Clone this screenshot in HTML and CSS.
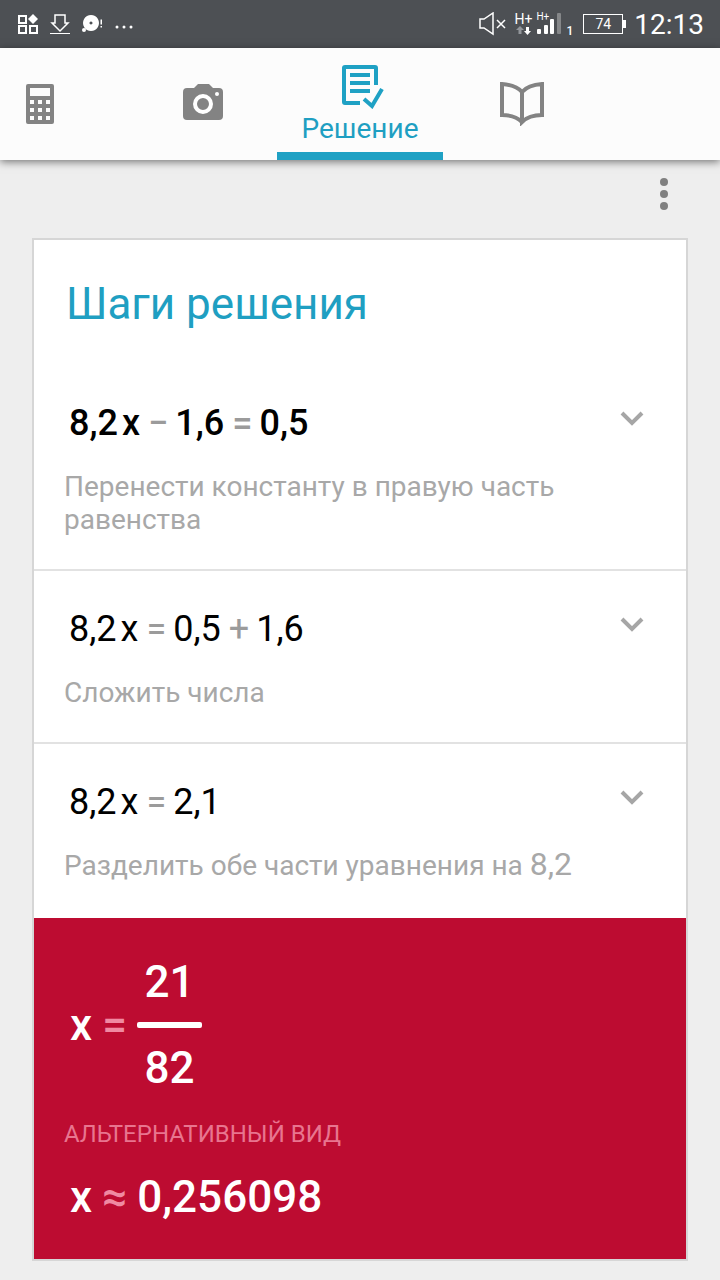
FILE: index.html
```html
<!DOCTYPE html>
<html lang="ru">
<head>
    <meta charset="UTF-8">
    <meta name="viewport" content="width=device-width, initial-scale=1.0">
    <title>Решение</title>
    <link rel="stylesheet" href="styles.css">
</head>
<body>
    <div class="status-bar">
        <div class="status-left">
            <svg width="22" height="22" viewBox="0 0 22 22" fill="none" stroke="#fff" stroke-width="2">
                <path d="M2 3h7v7H2zM2 13h7v7H2zM13 13h7v7h-7z"/>
                <path d="M16 1l5 5-5 5-5-5z" fill="#fff" stroke="none"/>
            </svg>
            <svg width="20" height="22" viewBox="0 0 20 22" fill="none" stroke="#fff">
                <path d="M5 2h10v8h3l-8 8-8-8h3z" stroke-width="1.500"/>
                <path d="M0 20.500h20" stroke-width="1"/>
            </svg>
            <svg width="22" height="22" viewBox="0 0 22 22" fill="#fff">
                <path d="M10 2a8 8 0 1 0 .01 0zM10 8.500a1.500 1.500 0 1 1-.01 0z" fill-rule="evenodd"/>
                <circle cx="3" cy="17" r="2"/>
                <path d="M19.500 6.500h1.500v5h-1.500zM19.500 13h1.500v1.500h-1.500z"/>
            </svg>
            <svg width="20" height="22" viewBox="0 0 20 22" fill="#fff">
                <circle cx="3" cy="14" r="1.500"/><circle cx="10" cy="14" r="1.500"/><circle cx="17" cy="14" r="1.500"/>
            </svg>
        </div>
        <div class="status-right">
            <svg width="28" height="24" viewBox="0 0 28 24" fill="none" stroke="#fff" stroke-width="1.500">
                <path d="M1 7h4l9-6v21l-9-6H1zM18 8l8 8M26 8l-8 8"/>
            </svg>
            <div class="network">
                <span>H+</span>
                <svg width="16" height="10" viewBox="0 0 16 10">
                    <path d="M5 0l4 4H6.500v4h-3V4H1z" fill="#92959a"/>
                    <path d="M11 1h3v4h2l-3.500 4L9 5h2z" fill="#fff"/>
                </svg>
            </div>
            <div class="signal">
                <svg width="26" height="24" viewBox="0 0 26 24" fill="#fff">
                    <rect x="1" y="17" width="4" height="5" rx="1"/>
                    <rect x="8" y="13" width="4" height="9" rx="1"/>
                    <rect x="14" y="7" width="4" height="15" rx="1"/>
                    <rect x="21" y="1" width="4" height="21" rx="1" fill="#858789"/>
                </svg>
                <span class="signal-type">H+</span>
            </div>
            <span class="sim">1</span>
            <div class="battery"><span>74</span></div>
            <span class="clock">12:13</span>
        </div>
    </div>

    <nav class="tabs">
        <button class="tab tab-calculator" aria-label="Калькулятор">
            <svg width="28" height="40" viewBox="0 0 28 40">
                <path fill="#838383" fill-rule="evenodd" d="M2 0h24a2 2 0 0 1 2 2v36a2 2 0 0 1-2 2H2a2 2 0 0 1-2-2V2a2 2 0 0 1 2-2zM4 4v8h20V4zM4 16v4h4v-4zM12 16v4h4v-4zM20 16v4h4v-4zM4 24v4h4v-4zM12 24v4h4v-4zM20 24v4h4v-4zM4 32v4h4v-4zM12 32v4h4v-4zM20 32v4h4v-4z"/>
            </svg>
        </button>
        <button class="tab tab-camera" aria-label="Камера">
            <svg width="40" height="40" viewBox="0 0 40 40">
                <path fill="#838383" d="M4 4h7l4-4h11l4 4h6a4 4 0 0 1 4 4v24a4 4 0 0 1-4 4H4a4 4 0 0 1-4-4V8a4 4 0 0 1 4-4z"/>
                <circle cx="20" cy="20" r="8" fill="none" stroke="#fff" stroke-width="4"/>
                <circle cx="34" cy="10" r="2" fill="#fff"/>
            </svg>
        </button>
        <button class="tab tab-active">
            <svg width="48" height="44" viewBox="-6 0 48 44" fill="none" stroke="#1fa1c4" stroke-width="4">
                <path d="M34 20V3a1 1 0 0 0-1-1H3a1 1 0 0 0-1 1v34a1 1 0 0 0 1 1h15M8 10h20M8 18h20M8 26h20M22 34l8 7 10-17"/>
            </svg>
            Решение
        </button>
        <button class="tab tab-book" aria-label="Справочник">
            <svg width="44" height="44" viewBox="0 0 44 44" fill="none" stroke="#838383" stroke-width="4">
                <path d="M22 40Q15 33 2 33V2Q16 3 22 10Q28 3 42 2V33Q29 33 22 40V10"/>
            </svg>
        </button>
    </nav>

    <div class="toolbar">
        <button class="menu-button" aria-label="Меню">
            <svg width="8" height="32" viewBox="0 0 8 32" fill="#808080">
                <circle cx="4" cy="4" r="4"/><circle cx="4" cy="16" r="4"/><circle cx="4" cy="28" r="4"/>
            </svg>
        </button>
    </div>

    <main class="card">
        <h1>Шаги решения</h1>

        <section class="step">
            <div class="step-head">
                <div class="equation bold">8,2<span class="var">x</span><span class="op">−</span>1,6<span class="op">=</span>0,5</div>
                <button class="expand" aria-label="Развернуть">
                    <svg width="24" height="16" viewBox="0 0 24 16" fill="none" stroke="#a6a6a6" stroke-width="4"><path d="M2 2l10 10L22 2"/></svg>
                </button>
            </div>
            <p>Перенести константу в правую часть равенства</p>
        </section>

        <section class="step">
            <div class="step-head">
                <div class="equation">8,2<span class="var">x</span><span class="op">=</span>0,5<span class="op">+</span>1,6</div>
                <button class="expand" aria-label="Развернуть">
                    <svg width="24" height="16" viewBox="0 0 24 16" fill="none" stroke="#a6a6a6" stroke-width="4"><path d="M2 2l10 10L22 2"/></svg>
                </button>
            </div>
            <p>Сложить числа</p>
        </section>

        <section class="step step-last">
            <div class="step-head">
                <div class="equation">8,2<span class="var">x</span><span class="op">=</span>2,1</div>
                <button class="expand" aria-label="Развернуть">
                    <svg width="24" height="16" viewBox="0 0 24 16" fill="none" stroke="#a6a6a6" stroke-width="4"><path d="M2 2l10 10L22 2"/></svg>
                </button>
            </div>
            <p>Разделить обе части уравнения на <span class="number">8,2</span></p>
        </section>

        <section class="answer">
            <div class="result">
                x<span class="op">=</span>
                <div class="fraction">
                    <span>21</span>
                    <span class="fraction-bar"></span>
                    <span>82</span>
                </div>
            </div>
            <h2>АЛЬТЕРНАТИВНЫЙ ВИД</h2>
            <div class="result">x<span class="op">≈</span>0,256098</div>
        </section>
    </main>
</body>
</html>
```

FILE: styles.css
```css
* {
    margin: 0;
    padding: 0;
    box-sizing: border-box;
}

body {
    font-family: Roboto, sans-serif;
    background: #eee;
    color: #000;
}

button {
    border: none;
    background: none;
    font: inherit;
    cursor: pointer;
}

svg {
    display: block;
}

/* Status bar */
.status-bar {
    display: flex;
    justify-content: space-between;
    align-items: center;
    height: 48px;
    padding: 0 16px 0 17px;
    background: #4d5054;
    color: #fff;
}

.status-left,
.status-right {
    display: flex;
    align-items: center;
}

.status-left {
    gap: 11px;
}

.network {
    margin-left: 8px;
    font-size: 14px;
    line-height: 14px;
}

.signal {
    position: relative;
    margin-left: 4px;
}

.signal-type {
    position: absolute;
    top: 0;
    left: 0;
    font-size: 10px;
    line-height: 10px;
}

.sim {
    align-self: flex-end;
    margin: 0 10px 2px 4px;
    font-size: 12px;
    line-height: 16px;
    font-weight: 500;
}

.battery {
    position: relative;
    width: 40px;
    height: 20px;
    border: 1px solid #fff;
    font-size: 14px;
    line-height: 18px;
    text-align: center;
}

.battery::after {
    content: "";
    position: absolute;
    top: 5px;
    right: -4px;
    width: 3px;
    height: 8px;
    background: #fff;
}

.clock {
    margin-left: 11px;
    font-size: 28px;
}

/* Tabs */
.tabs {
    position: relative;
    display: flex;
    height: 112px;
    overflow-x: clip;
    background: #fcfcfc;
    box-shadow: 0 2px 8px rgba(0, 0, 0, 0.5);
}

.tab {
    display: flex;
    flex-direction: column;
    align-items: center;
    justify-content: center;
    flex: none;
    width: 158px;
}

/* The first tab is scrolled partly out of view */
.tab-calculator {
    width: 178px;
    margin-left: -49px;
}

.tab-camera {
    width: 148px;
}

.tab-active {
    gap: 2px;
    width: 166px;
    padding-top: 12px;
    border-bottom: 8px solid #1fa1c4;
    color: #1f9fc2;
    font-size: 28px;
    line-height: 36px;
}

/* Menu row */
.toolbar {
    display: flex;
    justify-content: flex-end;
    height: 78px;
    padding: 18px 32px;
}

.menu-button {
    display: flex;
    justify-content: center;
    width: 48px;
    height: 32px;
}

/* Card */
.card {
    margin: 0 32px 17px;
    border: 2px solid #d6d6d6;
    background: #fff;
}

h1 {
    padding: 38px 32px 35px;
    color: #1f9fc2;
    font-size: 44px;
    line-height: 52px;
    font-weight: 400;
}

.step {
    padding: 36px 30px 33px;
}

.step + .step {
    border-top: 2px solid #e2e2e2;
}

.step-last {
    padding-bottom: 36px;
}

.step-head {
    display: flex;
    justify-content: space-between;
    align-items: flex-start;
    margin-bottom: 25px;
}

.equation {
    padding-left: 5px;
    font-size: 36px;
    line-height: 44px;
}

.bold {
    font-weight: 500;
}

.var {
    margin-left: 4px;
}

.op {
    margin: 0 7px 0 8px;
    color: #9b9b9b;
}

.expand {
    display: flex;
    align-items: center;
    justify-content: center;
    width: 48px;
    height: 36px;
}

.step p {
    color: #a8a8a8;
    font-size: 28px;
    line-height: 33px;
}

.number {
    font-size: 32px;
    line-height: 28px;
}

/* Answer */
.answer {
    padding: 38px 30px 36px;
    background: #bd0c31;
    color: #fff;
}

.result {
    display: flex;
    align-items: center;
    padding-left: 6px;
    font-size: 44px;
    line-height: 52px;
    font-weight: 500;
}

.result .op {
    margin: 0 10px;
    color: #f08aa2;
}

.fraction {
    display: flex;
    flex-direction: column;
    align-items: center;
    gap: 14px;
    width: 65px;
}

.fraction-bar {
    width: 100%;
    height: 6px;
    border-radius: 2px;
    background: #fff;
}

h2 {
    margin: 24px 0 21px;
    color: #e8758f;
    font-size: 24px;
    line-height: 32px;
    font-weight: 400;
}
```
